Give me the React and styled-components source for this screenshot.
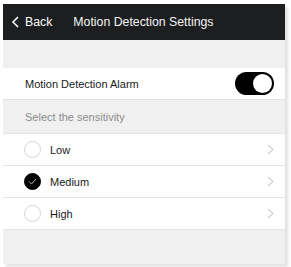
import React from "react";
import styled, { createGlobalStyle } from "styled-components";

const GlobalStyle = createGlobalStyle`
  body {
    margin: 0;
    background: #ffffff;
    font-family: "Liberation Sans", Arial, sans-serif;
  }
`;
const Page = styled.div`
  padding: 4px 0 0 3px;
  width: 291px;
  height: 267px;
  box-sizing: border-box;
`;
const Panel = styled.div`
  width: 282px;
  height: 260px;
  background: #f0f0f0;
  box-shadow: 3px 3px 3px rgba(0, 0, 0, 0.12);
  display: flex;
  flex-direction: column;
`;
const Header = styled.div`
  height: 36px;
  background: #1d1e20;
  color: #ffffff;
  display: flex;
  align-items: center;
  font-size: 12.3px;
  padding-left: 8px;
`;
const BackButton = styled.div`
  display: flex;
  align-items: center;
  gap: 6px;
  margin-right: 21px;
`;
const Title = styled.div`
  color: #f4f4f4;
`;
const Spacer = styled.div`
  height: ${(p) => p.h}px;
`;
const Row = styled.div`
  height: 31px;
  background: #ffffff;
  border-bottom: 1px solid #e3e3e3;
  display: flex;
  align-items: center;
  padding: 0 11px 0 ${(p) => (p.indent ? 21 : 22)}px;
  font-size: 11px;
  color: #1a1a1a;
`;
const SectionLabel = styled.div`
  height: 33px;
  display: flex;
  align-items: center;
  padding-left: 22px;
  font-size: 11px;
  color: #8c8c8c;
  border-bottom: 1px solid #e6e6e6;
`;
const Label = styled.div`
  flex: 1;
`;
const Toggle = styled.div`
  width: 39px;
  height: 23px;
  border-radius: 12px;
  background: #000;
  display: flex;
  align-items: center;
  justify-content: flex-end;
  padding-right: 2px;
  box-sizing: border-box;
`;
const Knob = styled.div`
  width: 19px;
  height: 19px;
  border-radius: 50%;
  background: #fff;
`;
const Radio = styled.div`
  width: 17px;
  height: 17px;
  border-radius: 50%;
  box-sizing: border-box;
  border: 1px solid ${(p) => (p.checked ? "#000" : "#d4d4d4")};
  background: ${(p) => (p.checked ? "#000" : "#fff")};
  display: flex;
  align-items: center;
  justify-content: center;
  margin-right: 9px;
`;

const Chevron = ({ color = "#b5b5b5" }) => (
  <svg width="7" height="11" viewBox="0 0 7 11">
    <path d="M1 1 L6 5.5 L1 10" fill="none" stroke={color} strokeWidth="1" />
  </svg>
);

const options = [
  { name: "Low", checked: false },
  { name: "Medium", checked: true },
  { name: "High", checked: false },
];

export default function App() {
  return (
    <Page>
      <GlobalStyle />
      <Panel>
        <Header>
          <BackButton>
            <svg width="8" height="12" viewBox="0 0 8 12">
              <path d="M7 1 L2 6 L7 11" fill="none" stroke="#fff" strokeWidth="1.6" />
            </svg>
            <span>Back</span>
          </BackButton>
          <Title>Motion Detection Settings</Title>
        </Header>
        <Spacer h={28} />
        <Row>
          <Label>Motion Detection Alarm</Label>
          <Toggle>
            <Knob />
          </Toggle>
        </Row>
        <SectionLabel>Select the sensitivity</SectionLabel>
        {options.map((o) => (
          <Row key={o.name} indent>
            <Radio checked={o.checked}>
              {o.checked && (
                <svg width="9" height="7" viewBox="0 0 9 7">
                  <path d="M1 3.5 L3.5 6 L8 1" fill="none" stroke="#bbb" strokeWidth="1" />
                </svg>
              )}
            </Radio>
            <Label>{o.name}</Label>
            <Chevron />
          </Row>
        ))}
      </Panel>
    </Page>
  );
}
